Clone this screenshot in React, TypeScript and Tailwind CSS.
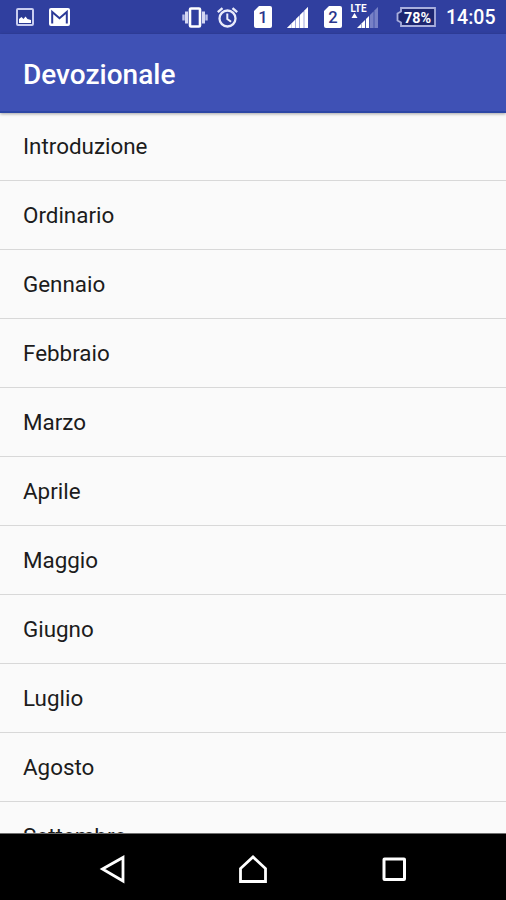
import React from 'react';

const months = [
  'Introduzione',
  'Ordinario',
  'Gennaio',
  'Febbraio',
  'Marzo',
  'Aprile',
  'Maggio',
  'Giugno',
  'Luglio',
  'Agosto',
  'Settembre'
];

function PictureIcon() {
  return (
    <svg width="18" height="18" viewBox="0 0 18 18">
      <rect x="1" y="1" width="16" height="16" rx="1" fill="#2b3a94" stroke="#c9cdf0" strokeWidth="2" />
      <path d="M3 15v-4l2.500-2 2 2 2-2.500 2 2.500 3.500 1v3z" fill="#fff" />
    </svg>
  );
}

function MailIcon() {
  return (
    <svg width="21" height="18" viewBox="0 0 21 18">
      <rect width="21" height="18" rx="2" fill="#fff" />
      <path d="M3.200 15.500V4l7.300 6.300L17.800 4v11.500" fill="none" stroke="#2c3a98" strokeWidth="2" />
    </svg>
  );
}

function VibrateIcon() {
  return (
    <svg width="26" height="21" viewBox="0 0 26 21">
      <rect x="8" y="1.500" width="10" height="18" rx="1" fill="none" stroke="#fff" strokeWidth="2.600" />
      <path d="M4.500 4.500v12M21.500 4.500v12" stroke="#d5d8f3" strokeWidth="3" />
      <path d="M1.500 7.500v6M24.500 7.500v6" stroke="#b9bfe8" strokeWidth="2.400" />
    </svg>
  );
}

function AlarmIcon() {
  return (
    <svg width="21" height="21" viewBox="0 0 21 21" fill="none" stroke="#e9ebfb">
      <circle cx="10.500" cy="11.500" r="8" strokeWidth="2.300" />
      <path d="M10.300 6.500v5.500l3.800 2.700" strokeWidth="2" />
      <path d="M.8 5.200l4.700-4M20.200 5.200l-4.700-4" strokeWidth="2.400" />
    </svg>
  );
}

function SimIcon({ slot }: { slot: number }) {
  return (
    <svg width="18" height="22" viewBox="0 0 18 22">
      <path d="M5 0h11a2 2 0 0 1 2 2v18a2 2 0 0 1-2 2H2a2 2 0 0 1-2-2V5z" fill="#fff" />
      <text x="9" y="17" textAnchor="middle" fontFamily="Roboto, sans-serif" fontSize="16.500" fontWeight="500" fill="#29358c">
        {slot}
      </text>
    </svg>
  );
}

function SignalIcon({ level }: { level: number }) {
  const bars = [
    'M0 21l4-4v4z',
    'M4.500 21v-4.500L8 13v8z',
    'M9 21v-9L12 9v12z',
    'M13 21V8L16.500 4.500V21z',
    'M17.500 21V3.500L21 0v21z'
  ];

  return (
    <svg width="21" height="21" viewBox="0 0 21 21">
      <path d="M0 21L21 0v21z" fill={level === 5 ? '#a0a8dc' : '#4654ac'} />
      {bars.map((bar, index) => (
        <path key={index} d={bar} fill={index < level ? '#fff' : '#7781c6'} />
      ))}
    </svg>
  );
}

function BatteryIcon() {
  return (
    <svg width="40" height="20" viewBox="0 0 40 20">
      <path d="M5 1h34v18H5v-3.500L1.500 13.500v-7L5 4.500z" fill="#1d2670" stroke="#a9afdd" strokeWidth="1.800" />
      <text x="21.500" y="15.500" textAnchor="middle" fontFamily="Roboto, sans-serif" fontSize="14.500" fontWeight="700" fill="#fff" textLength="27" lengthAdjust="spacingAndGlyphs">
        78%
      </text>
    </svg>
  );
}

function StatusBar() {
  return (
    <div className="flex h-[34px] shrink-0 items-center bg-[#303f9f] pl-4 pr-[11px] text-white">
      <PictureIcon />
      <div className="ml-[15px]">
        <MailIcon />
      </div>
      <div className="ml-auto flex items-center">
        <VibrateIcon />
        <div className="ml-[9px]">
          <AlarmIcon />
        </div>
        <div className="ml-4">
          <SimIcon slot={1} />
        </div>
        <div className="ml-[15px]">
          <SignalIcon level={5} />
        </div>
        <div className="ml-4">
          <SimIcon slot={2} />
        </div>
        <div className="relative ml-[15px]">
          <SignalIcon level={3} />
          <svg className="absolute -left-[7px] -top-[4px]" width="17" height="16" viewBox="0 0 17 16">
            <text x="0.500" y="9" fontFamily="Roboto, sans-serif" fontSize="11" fontWeight="700" fill="#fff" textLength="16" lengthAdjust="spacingAndGlyphs">
              LTE
            </text>
            <path d="M1.500 15L4.500 10l3 5z" fill="#fff" />
          </svg>
        </div>
        <div className="ml-[18px]">
          <BatteryIcon />
        </div>
        <span className="ml-[10px] w-[49px] whitespace-nowrap pt-[2px] text-[19.500px] font-medium leading-none">14:05</span>
      </div>
    </div>
  );
}

function NavigationBar() {
  return (
    <nav className="flex h-[67px] shrink-0 items-center justify-center gap-[112px] border-t border-[#6f6f6f] bg-black pt-[3px]">
      <svg width="28" height="30" viewBox="0 0 28 30" fill="none" stroke="#fff" strokeWidth="2.800">
        <path d="M4.500 15L25 3.500v23.500z" />
      </svg>
      <svg width="30" height="30" viewBox="0 0 30 30" fill="none" stroke="#fff" strokeWidth="2.800">
        <path d="M2.500 27.500V14.500L15 3l12.500 11.500v13z" />
      </svg>
      <svg width="28" height="30" viewBox="0 0 28 30" fill="none" stroke="#fff" strokeWidth="3">
        <rect x="4" y="5" width="20.500" height="20.500" rx="0.500" />
      </svg>
    </nav>
  );
}

export default function App() {
  return (
    <div className="flex h-screen flex-col overflow-hidden bg-[#fafafa] font-['Roboto',sans-serif]">
      <StatusBar />
      <header className="z-10 flex h-[79px] shrink-0 items-center border-b-2 border-[#2c46a5] bg-[#3f51b5] pl-[23px] pt-[5px] shadow-[0_1px_3px_rgba(0,0,0,0.35)]">
        <h1 className="text-[28px] font-medium leading-none text-white">Devozionale</h1>
      </header>
      <ul className="-mt-px min-h-0 flex-1 overflow-hidden">
        {months.map((month) => (
          <li
            key={month}
            className="flex h-[69px] items-center border-b border-[#d8d8d8] pl-[23px] pt-[2px] text-[22.400px] text-[#1c1c1c]"
          >
            {month}
          </li>
        ))}
      </ul>
      <NavigationBar />
    </div>
  );
}
